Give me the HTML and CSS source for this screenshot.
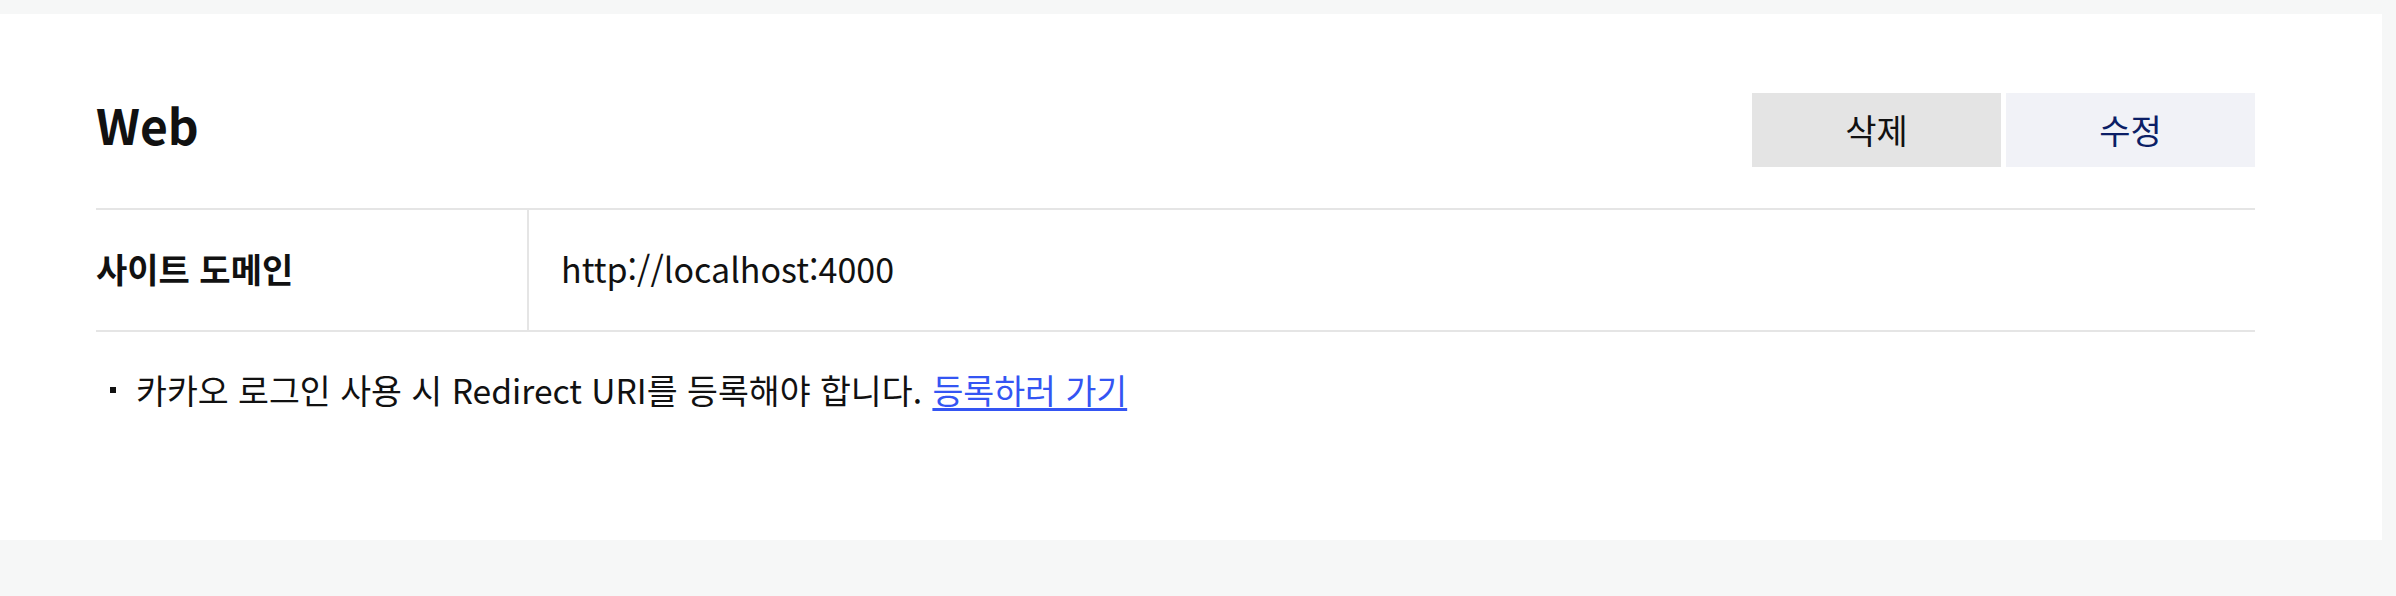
FILE: index.html
```html
<!DOCTYPE html>
<html lang="ko">
<head>
<meta charset="utf-8">
<title>Web</title>
<link rel="stylesheet" href="styles.css">
</head>
<body>
<div class="page">
  <section class="panel">
    <div class="head">
      <h2 class="title">Web</h2>
      <div class="actions">
        <button class="btn btn-del" type="button">삭제</button>
        <button class="btn btn-edit" type="button">수정</button>
      </div>
    </div>
    <div class="table">
      <div class="th">사이트 도메인</div>
      <div class="td">http://localhost:4000</div>
    </div>
    <ul class="notes">
      <li>카카오 로그인 사용 시 Redirect URI를 등록해야 합니다. <a href="#" class="link">등록하러 가기</a></li>
    </ul>
  </section>
</div>
</body>
</html>
```

FILE: styles.css
```css
* { box-sizing: border-box; }
html, body { margin: 0; padding: 0; }
body {
  background: #f6f7f7;
  font-family: "Noto Sans CJK KR", "Noto Sans", sans-serif;
  color: #111;
  width: 2396px;
  height: 596px;
  overflow: hidden;
}
.page {
  padding: 14px 14px 0 0;
}
.panel {
  background: #fff;
  height: 526px;
  padding: 79px 127px 0 96px;
}
.head {
  display: flex;
  align-items: center;
  justify-content: space-between;
  height: 74px;
  margin-bottom: 41px;
}
.title {
  margin: 0;
  padding-bottom: 12px;
  font-size: 48px;
  font-weight: 700;
  line-height: 1;
  color: #111;
}
.actions {
  display: flex;
  gap: 5px;
}
.btn {
  width: 249px;
  height: 74px;
  border: 0;
  padding: 0;
  font-family: inherit;
  font-size: 34px;
  line-height: 1;
  cursor: pointer;
}
.btn-del { background: #e4e4e4; color: #111; }
.btn-edit { background: #f1f2f7; color: #0b1e66; }
.table {
  display: grid;
  grid-template-columns: 433px 1fr;
  border-top: 2px solid #e5e5e5;
  border-bottom: 2px solid #e5e5e5;
  height: 124px;
}
.th {
  display: flex;
  align-items: center;
  padding-bottom: 4px;
  font-size: 34px;
  font-weight: 700;
  border-right: 2px solid #e5e5e5;
}
.td {
  display: flex;
  align-items: center;
  padding-left: 32px;
  padding-bottom: 4px;
  font-size: 34px;
}
.notes {
  list-style: none;
  margin: 0;
  padding: 33px 0 0 14px;
  font-size: 33.6px;
  line-height: 50px;
}
.notes li {
  position: relative;
  padding-left: 26px;
}
.notes li::before {
  content: "";
  position: absolute;
  left: 0;
  top: 22px;
  width: 6px;
  height: 6px;
  background: #111;
}
.link {
  color: #3455f3;
  text-decoration: underline;
  text-underline-offset: 4px;
  margin-left: 1px;
}
```
